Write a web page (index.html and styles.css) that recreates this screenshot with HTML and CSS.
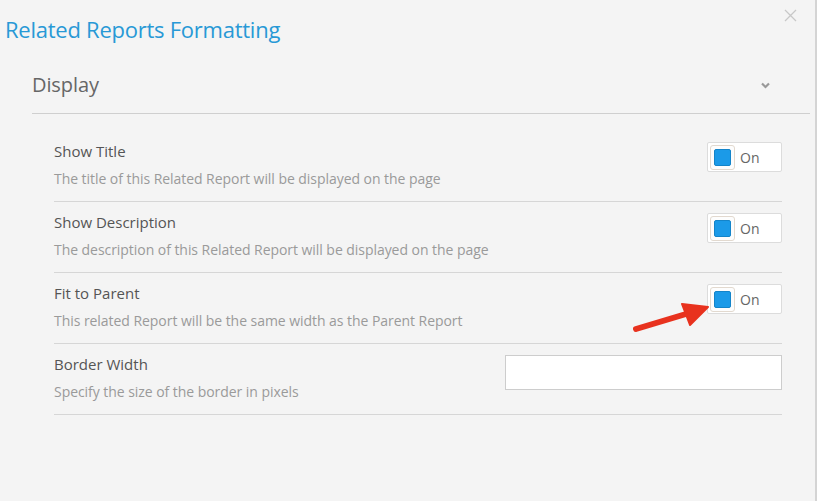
FILE: index.html
```html
<!DOCTYPE html>
<html>
<head>
<meta charset="utf-8">
<link rel="stylesheet" href="styles.css">
</head>
<body>
<div class="modal">
  <div class="header">
    <h1 class="title">Related Reports Formatting</h1>
    <span class="close">
      <svg width="13" height="13" viewBox="0 0 13 13"><path d="M1 1L12 12M12 1L1 12" stroke="#c8c8c8" stroke-width="1.3" fill="none"/></svg>
    </span>
  </div>
  <div class="section">
    <div class="section-head">
      <span class="section-title">Display</span>
      <svg class="chev" width="9" height="7" viewBox="0 0 9 7"><path d="M1 1.5L4.5 5L8 1.5" stroke="#999" stroke-width="2.2" fill="none"/></svg>
    </div>
    <div class="rows">
      <div class="row">
        <div class="info">
          <div class="label">Show Title</div>
          <div class="desc">The title of this Related Report will be displayed on the page</div>
        </div>
        <div class="toggle"><span class="knob"><span class="dot"></span></span><span class="on">On</span></div>
      </div>
      <div class="row">
        <div class="info">
          <div class="label">Show Description</div>
          <div class="desc">The description of this Related Report will be displayed on the page</div>
        </div>
        <div class="toggle"><span class="knob"><span class="dot"></span></span><span class="on">On</span></div>
      </div>
      <div class="row">
        <div class="info">
          <div class="label">Fit to Parent</div>
          <div class="desc">This related Report will be the same width as the Parent Report</div>
        </div>
        <div class="toggle"><span class="knob"><span class="dot"></span></span><span class="on">On</span></div>
        <svg class="arrow" width="80" height="36" viewBox="0 0 80 36">
          <path d="M4 28 L54 13" stroke="#e8321e" stroke-width="6" stroke-linecap="round" fill="none"/>
          <path d="M50 3 L76 6 L58 24 Z" fill="#e8321e" stroke="#e8321e" stroke-width="2" stroke-linejoin="round"/>
        </svg>
      </div>
      <div class="row">
        <div class="info">
          <div class="label">Border Width</div>
          <div class="desc">Specify the size of the border in pixels</div>
        </div>
        <input class="text-input" type="text">
      </div>
    </div>
  </div>
</div>
</body>
</html>
```
FILE: styles.css
```css
* { box-sizing: border-box; }
html, body { margin: 0; padding: 0; }
body {
  width: 817px;
  height: 501px;
  background: #f4f4f4;
  font-family: "Open Sans", "Liberation Sans", sans-serif;
  overflow: hidden;
}
.modal {
  height: 501px;
  border-right: 2px solid #d4d4d4;
  position: relative;
}
.header {
  display: flex;
  justify-content: space-between;
  align-items: flex-start;
  padding: 14px 18px 0 5px;
  height: 58px;
}
.title {
  margin: 0;
  font-size: 22px;
  font-weight: 400;
  color: #2899d6;
  letter-spacing: -0.25px;
  line-height: 30px;
}
.close { margin-top: -9px; }
.section { padding: 0 5px 0 32px; }
.section-head {
  display: flex;
  justify-content: space-between;
  align-items: center;
  height: 56px;
  border-bottom: 1px solid #cfcfcf;
  padding-right: 40px;
}
.section-title {
  font-size: 20px;
  color: #666;
  letter-spacing: -0.1px;
  margin-top: -2px;
}
.chev { margin-top: -1px; }
.rows { padding: 17px 28px 0 22px; }
.row {
  display: flex;
  justify-content: space-between;
  align-items: center;
  height: 71px;
  border-bottom: 1px solid #d6d6d6;
  position: relative;
}
.info { margin-top: -3px; }
.label {
  font-size: 15px;
  color: #555;
  letter-spacing: 0;
  line-height: 20px;
}
.desc {
  font-size: 14px;
  color: #9a9a9a;
  letter-spacing: -0.05px;
  line-height: 20px;
  margin-top: 8px;
}
.toggle {
  width: 75px;
  height: 30px;
  background: #fff;
  border: 1px solid #dcdcdc;
  border-radius: 2px;
  display: flex;
  align-items: center;
  padding-left: 2px;
  margin-top: -18px;
}
.knob {
  width: 25px;
  height: 25px;
  border: 1px solid #e2d9cf;
  border-radius: 3px;
  display: flex;
  align-items: center;
  justify-content: center;
  background: #fdfdfd;
}
.dot {
  width: 17px;
  height: 17px;
  background: #1b9ae8;
  border-radius: 2px;
  border: 1px solid #1484c9;
}
.on {
  font-size: 14px;
  color: #666;
  margin-left: 5px;
}
.arrow {
  position: absolute;
  right: 70px;
  top: 28px;
}
.text-input {
  width: 277px;
  height: 35px;
  border: 1px solid #cdcdcd;
  background: #fff;
  margin-top: -14px;
  outline: none;
}
```
